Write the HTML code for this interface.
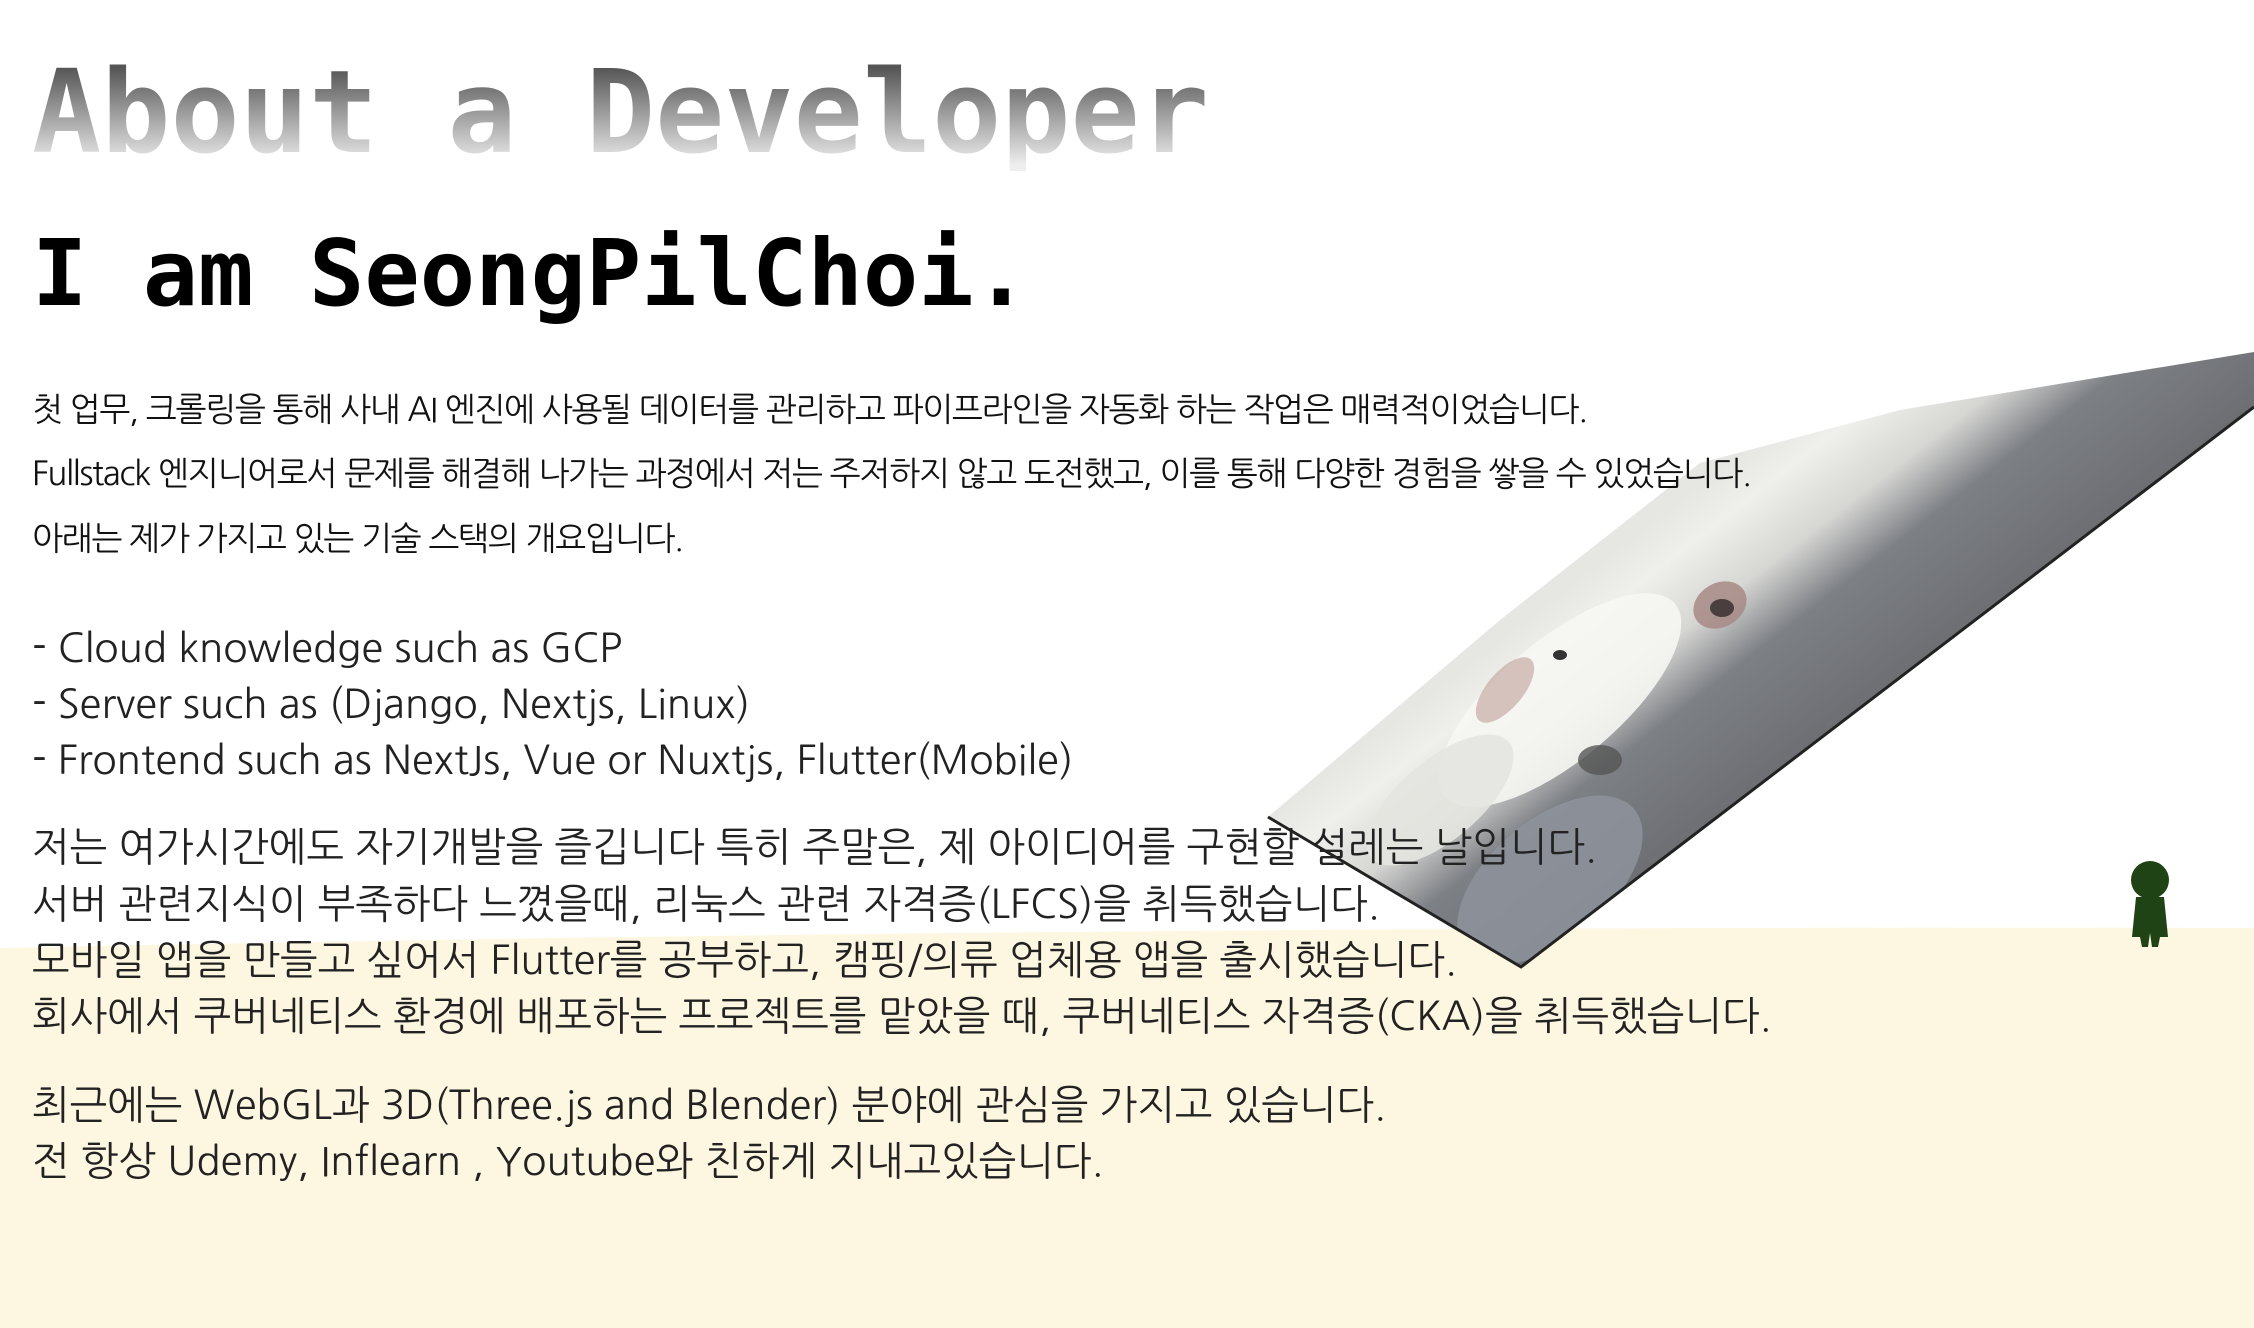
<!DOCTYPE html>
<html><head><meta charset="utf-8"><style>
html,body{margin:0;padding:0}
body{width:2254px;height:1328px;position:relative;overflow:hidden;background:#fff;font-family:"Liberation Sans","NanumGothic",sans-serif}
.t{position:absolute;left:32px;white-space:nowrap;line-height:1}
#title{top:56px;font-family:"DejaVu Sans Mono","Liberation Mono",monospace;font-weight:bold;font-size:115px;background:linear-gradient(#555 10%,#eee 95%);-webkit-background-clip:text;background-clip:text;color:transparent}
#name{top:228px;font-family:"DejaVu Sans Mono","Liberation Mono",monospace;font-weight:bold;font-size:92px;color:#000}
.h{font-family:"NanumGothic","Noto Sans CJK KR",sans-serif;font-size:33px;color:#111;letter-spacing:-1.3px}
.p{font-family:"NanumGothic","Noto Sans CJK KR",sans-serif;font-size:40px;color:#222}
</style></head><body>
<svg width="2254" height="1328" style="position:absolute;left:0;top:0">
<defs>
<linearGradient id="ph" x1="1850" y1="720" x2="1680" y2="500" gradientUnits="userSpaceOnUse">
<stop offset="0" stop-color="#6c6e72"/><stop offset="0.4" stop-color="#7d8085"/><stop offset="0.62" stop-color="#d6d6d3"/><stop offset="0.85" stop-color="#efefec"/><stop offset="1" stop-color="#e6e6e2"/>
</linearGradient>
<clipPath id="cp"><polygon points="1268,817 1500,620 1700,463 1900,410 2254,352 2254,407 1521,967"/></clipPath>
</defs>
<path d="M0 948 Q1100 925 2254 928 L2254 1328 L0 1328 Z" fill="#fdf6e0"/>
<polygon points="1268,817 1500,620 1700,463 1900,410 2254,352 2254,407 1521,967" fill="url(#ph)"/>
<g clip-path="url(#cp)">
<ellipse cx="1560" cy="700" rx="150" ry="60" fill="#f6f6f3" opacity="0.9" transform="rotate(-40 1560 700)"/>
<ellipse cx="1440" cy="800" rx="90" ry="40" fill="#e4e4e0" opacity="0.9" transform="rotate(-40 1440 800)"/>
<ellipse cx="1550" cy="880" rx="110" ry="60" fill="#8e939c" opacity="0.85" transform="rotate(-40 1550 880)"/>
<ellipse cx="1720" cy="605" rx="28" ry="22" fill="#a88a86" opacity="0.85" transform="rotate(-30 1720 605)"/>
<ellipse cx="1722" cy="608" rx="12" ry="9" fill="#4a3e3e"/>
<ellipse cx="1600" cy="760" rx="22" ry="15" fill="#555" opacity="0.8"/>
<ellipse cx="1560" cy="655" rx="7" ry="5" fill="#333"/>
<ellipse cx="1505" cy="690" rx="18" ry="40" fill="#c0a09a" opacity="0.6" transform="rotate(40 1505 690)"/>
</g>
<polyline points="1268,817 1521,967 2254,407" fill="none" stroke="#222" stroke-width="3"/>
<g fill="#1f4315">
<circle cx="2150" cy="880" r="19"/>
<path d="M2136 897 h28 l4 40 h-8 l-2 10 h-6 l-2 -14 l-2 14 h-6 l-2 -10 h-8 z"/>
</g>
</svg>
<div class="t" id="title">About a Developer</div>
<div class="t" id="name">I am SeongPilChoi.</div>
<div class="t h" style="top:393px">첫 업무, 크롤링을 통해 사내 AI 엔진에 사용될 데이터를 관리하고 파이프라인을 자동화 하는 작업은 매력적이었습니다.</div>
<div class="t h" style="top:457px">Fullstack 엔지니어로서 문제를 해결해 나가는 과정에서 저는 주저하지 않고 도전했고, 이를 통해 다양한 경험을 쌓을 수 있었습니다.</div>
<div class="t h" style="top:522px">아래는 제가 가지고 있는 기술 스택의 개요입니다.</div>
<div class="t p" style="top:628px">- Cloud knowledge such as GCP</div>
<div class="t p" style="top:684px">- Server such as (Django, Nextjs, Linux)</div>
<div class="t p" style="top:740px">- Frontend such as NextJs, Vue or Nuxtjs, Flutter(Mobile)</div>
<div class="t p" style="top:827px">저는 여가시간에도 자기개발을 즐깁니다 특히 주말은, 제 아이디어를 구현할 설레는 날입니다.</div>
<div class="t p" style="top:884px">서버 관련지식이 부족하다 느꼈을때, 리눅스 관련 자격증(LFCS)을 취득했습니다.</div>
<div class="t p" style="top:940px">모바일 앱을 만들고 싶어서 Flutter를 공부하고, 캠핑/의류 업체용 앱을 출시했습니다.</div>
<div class="t p" style="top:996px">회사에서 쿠버네티스 환경에 배포하는 프로젝트를 맡았을 때, 쿠버네티스 자격증(CKA)을 취득했습니다.</div>
<div class="t p" style="top:1085px">최근에는 WebGL과 3D(Three.js and Blender) 분야에 관심을 가지고 있습니다.</div>
<div class="t p" style="top:1141px">전 항상 Udemy, Inflearn , Youtube와 친하게 지내고있습니다.</div>
</body></html>
